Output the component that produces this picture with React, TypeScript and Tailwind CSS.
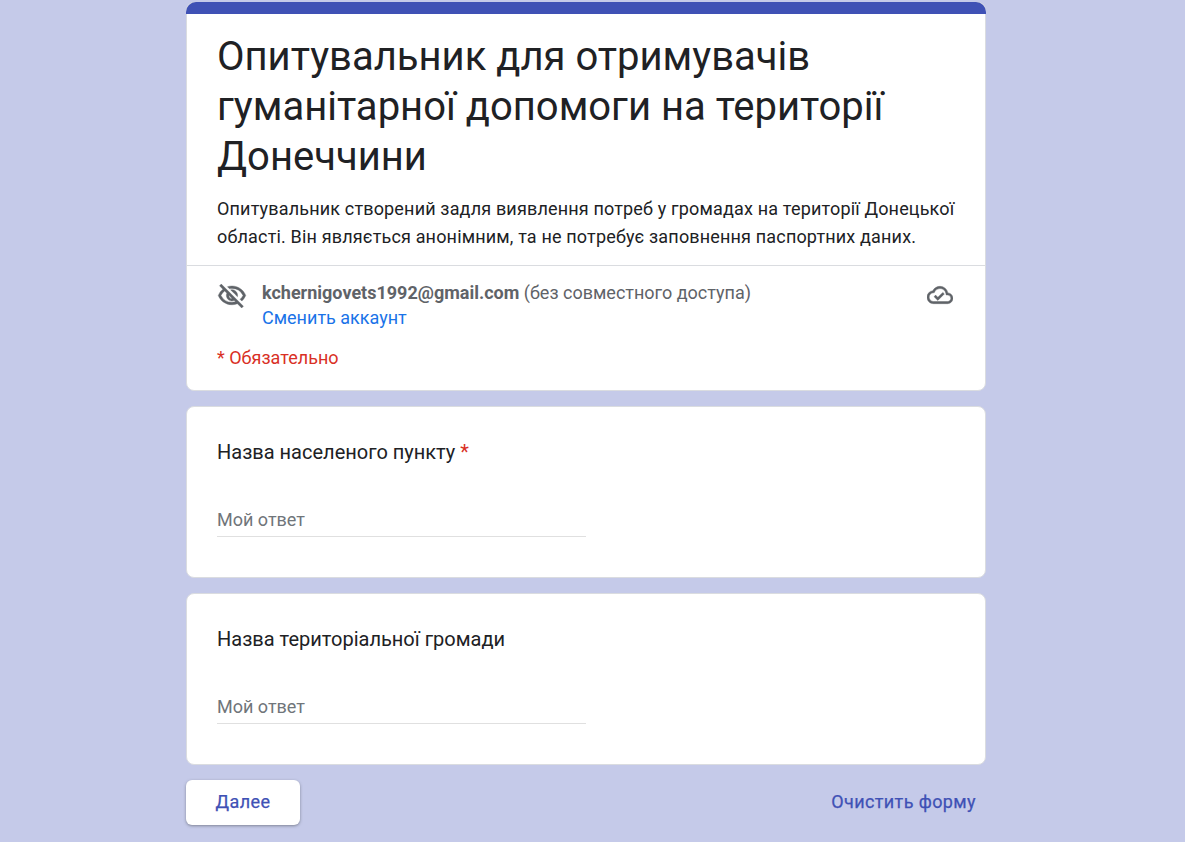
const CARD = 'rounded-lg border border-[#dadce0] bg-white'

function QuestionCard({ title, required }: { title: string; required?: boolean }) {
  return (
    <div className={`${CARD} h-[172px] px-[30px] pt-[33px]`}>
      <div className="text-[20px] leading-[24px] text-[#202124]">
        {title}
        {required && <span className="text-[#d93025]"> *</span>}
      </div>
      <div className="mt-[44px] w-[369px] border-b border-[#e0e0e0] pb-[4px] text-[18px] leading-[24px] text-[#70757a]">
        Мой ответ
      </div>
    </div>
  )
}

export default function App() {
  return (
    <div className="h-[842px] overflow-hidden bg-[#c5cae9] font-['Roboto',sans-serif]">
      <div className="ml-[186px] w-[800px] pt-[2px]">
        {/* header card */}
        <div className={`${CARD} h-[389px]`}>
          <div className="-mx-px -mt-px h-[12px] rounded-t-[10px] bg-[#3f51b5]" />
          <div className="px-[30px] pt-[18px]">
            <h1 className="text-[40px] leading-[50px] text-[#202124]">
              Опитувальник для отримувачів гуманітарної допомоги на території Донеччини
            </h1>
            <p className="mt-[13px] text-[18px] leading-[27.5px] tracking-[0.165px] text-[#202124]">
              Опитувальник створений задля виявлення потреб у громадах на території Донецької області. Він являється анонімним, та не потребує заповнення паспортних даних.
            </p>
          </div>
          <div className="mt-[15px] border-t border-[#dadce0] px-[30px] pt-[14px]">
            <div className="flex items-start">
              <svg className="mt-[1px] h-[30px] w-[30px] fill-[#5f6368] stroke-[#5f6368] stroke-[0.3px]" viewBox="0 0 24 24">
                <path d="M12 6a9.77 9.77 0 0 1 8.82 5.5 9.77 9.77 0 0 1-2.41 3.12l1.41 1.41c1.39-1.23 2.49-2.77 3.18-4.53C21.27 7.11 17 4 12 4c-1.27 0-2.49.2-3.64.57l1.65 1.65C10.66 6.09 11.32 6 12 6zm-1.07 1.14L13 9.21c.57.25 1.03.71 1.28 1.28l2.07 2.07c.08-.34.14-.7.14-1.07C16.5 9.01 14.48 7 12 7c-.37 0-.72.05-1.07.14zM2.01 3.87l2.68 2.68A11.738 11.738 0 0 0 1 11.5C2.73 15.89 7 19 12 19c1.52 0 2.98-.29 4.32-.82l3.42 3.42 1.41-1.41L3.42 2.45 2.01 3.87zm7.5 7.5 2.61 2.61c-.04.01-.08.02-.12.02a2.5 2.5 0 0 1-2.5-2.5c0-.05.01-.08.01-.13zm-3.4-3.4 1.75 1.75a4.6 4.6 0 0 0-.36 1.78 4.507 4.507 0 0 0 6.27 4.14l.98.98c-.88.24-1.8.38-2.75.38a9.77 9.77 0 0 1-8.82-5.5c.7-1.43 1.72-2.61 2.93-3.53z" />
              </svg>
              <div className="ml-[15px] flex-1 text-[18px] leading-[25px] text-[#5f6368]">
                <div>
                  <span className="font-bold">kchernigovets1992@gmail.com</span> (без совместного доступа)
                </div>
                <div className="text-[#1a73e8]">Сменить аккаунт</div>
              </div>
              <svg className="mr-[2px] mt-[2px] h-[26px] w-[26px] fill-[#5f6368] stroke-[#5f6368] stroke-[0.4px]" viewBox="0 0 24 24">
                <path d="M19.35 10.04A7.49 7.49 0 0 0 12 4C9.11 4 6.6 5.64 5.35 8.04A5.994 5.994 0 0 0 0 14c0 3.31 2.69 6 6 6h13c2.76 0 5-2.24 5-5 0-2.64-2.05-4.78-4.65-4.96zM19 18H6c-2.21 0-4-1.79-4-4 0-2.05 1.53-3.76 3.56-3.97l1.07-.11.5-.95A5.469 5.469 0 0 1 12 6c2.62 0 4.88 1.86 5.39 4.43l.3 1.5 1.53.11A2.98 2.98 0 0 1 22 15c0 1.65-1.35 3-3 3zm-9-3.82-2.09-2.09L6.5 13.5 10 17l6.01-6.01-1.41-1.41z" />
              </svg>
            </div>
            <div className="mt-[16px] text-[18px] leading-[24px] text-[#d93025]">* Обязательно</div>
          </div>
        </div>

        <div className="mt-[15px] flex flex-col gap-[15px]">
          <QuestionCard title="Назва населеного пункту" required />
          <QuestionCard title="Назва територіальної громади" />
        </div>

        <div className="mt-[15px] flex items-center justify-between">
          <button className="h-[45px] w-[114px] rounded-md bg-white pb-[2px] text-[18px] font-normal tracking-[0.4px] text-[#3f51b5] shadow-[0_1px_3px_rgba(60,64,67,0.5)] [-webkit-text-stroke:0.25px_#3f51b5]">
            Далее
          </button>
          <button className="mr-[10px] pb-[2px] text-[18px] font-normal tracking-[0.4px] text-[#3f51b5] [-webkit-text-stroke:0.25px_#3f51b5]">
            Очистить форму
          </button>
        </div>
      </div>
    </div>
  )
}
